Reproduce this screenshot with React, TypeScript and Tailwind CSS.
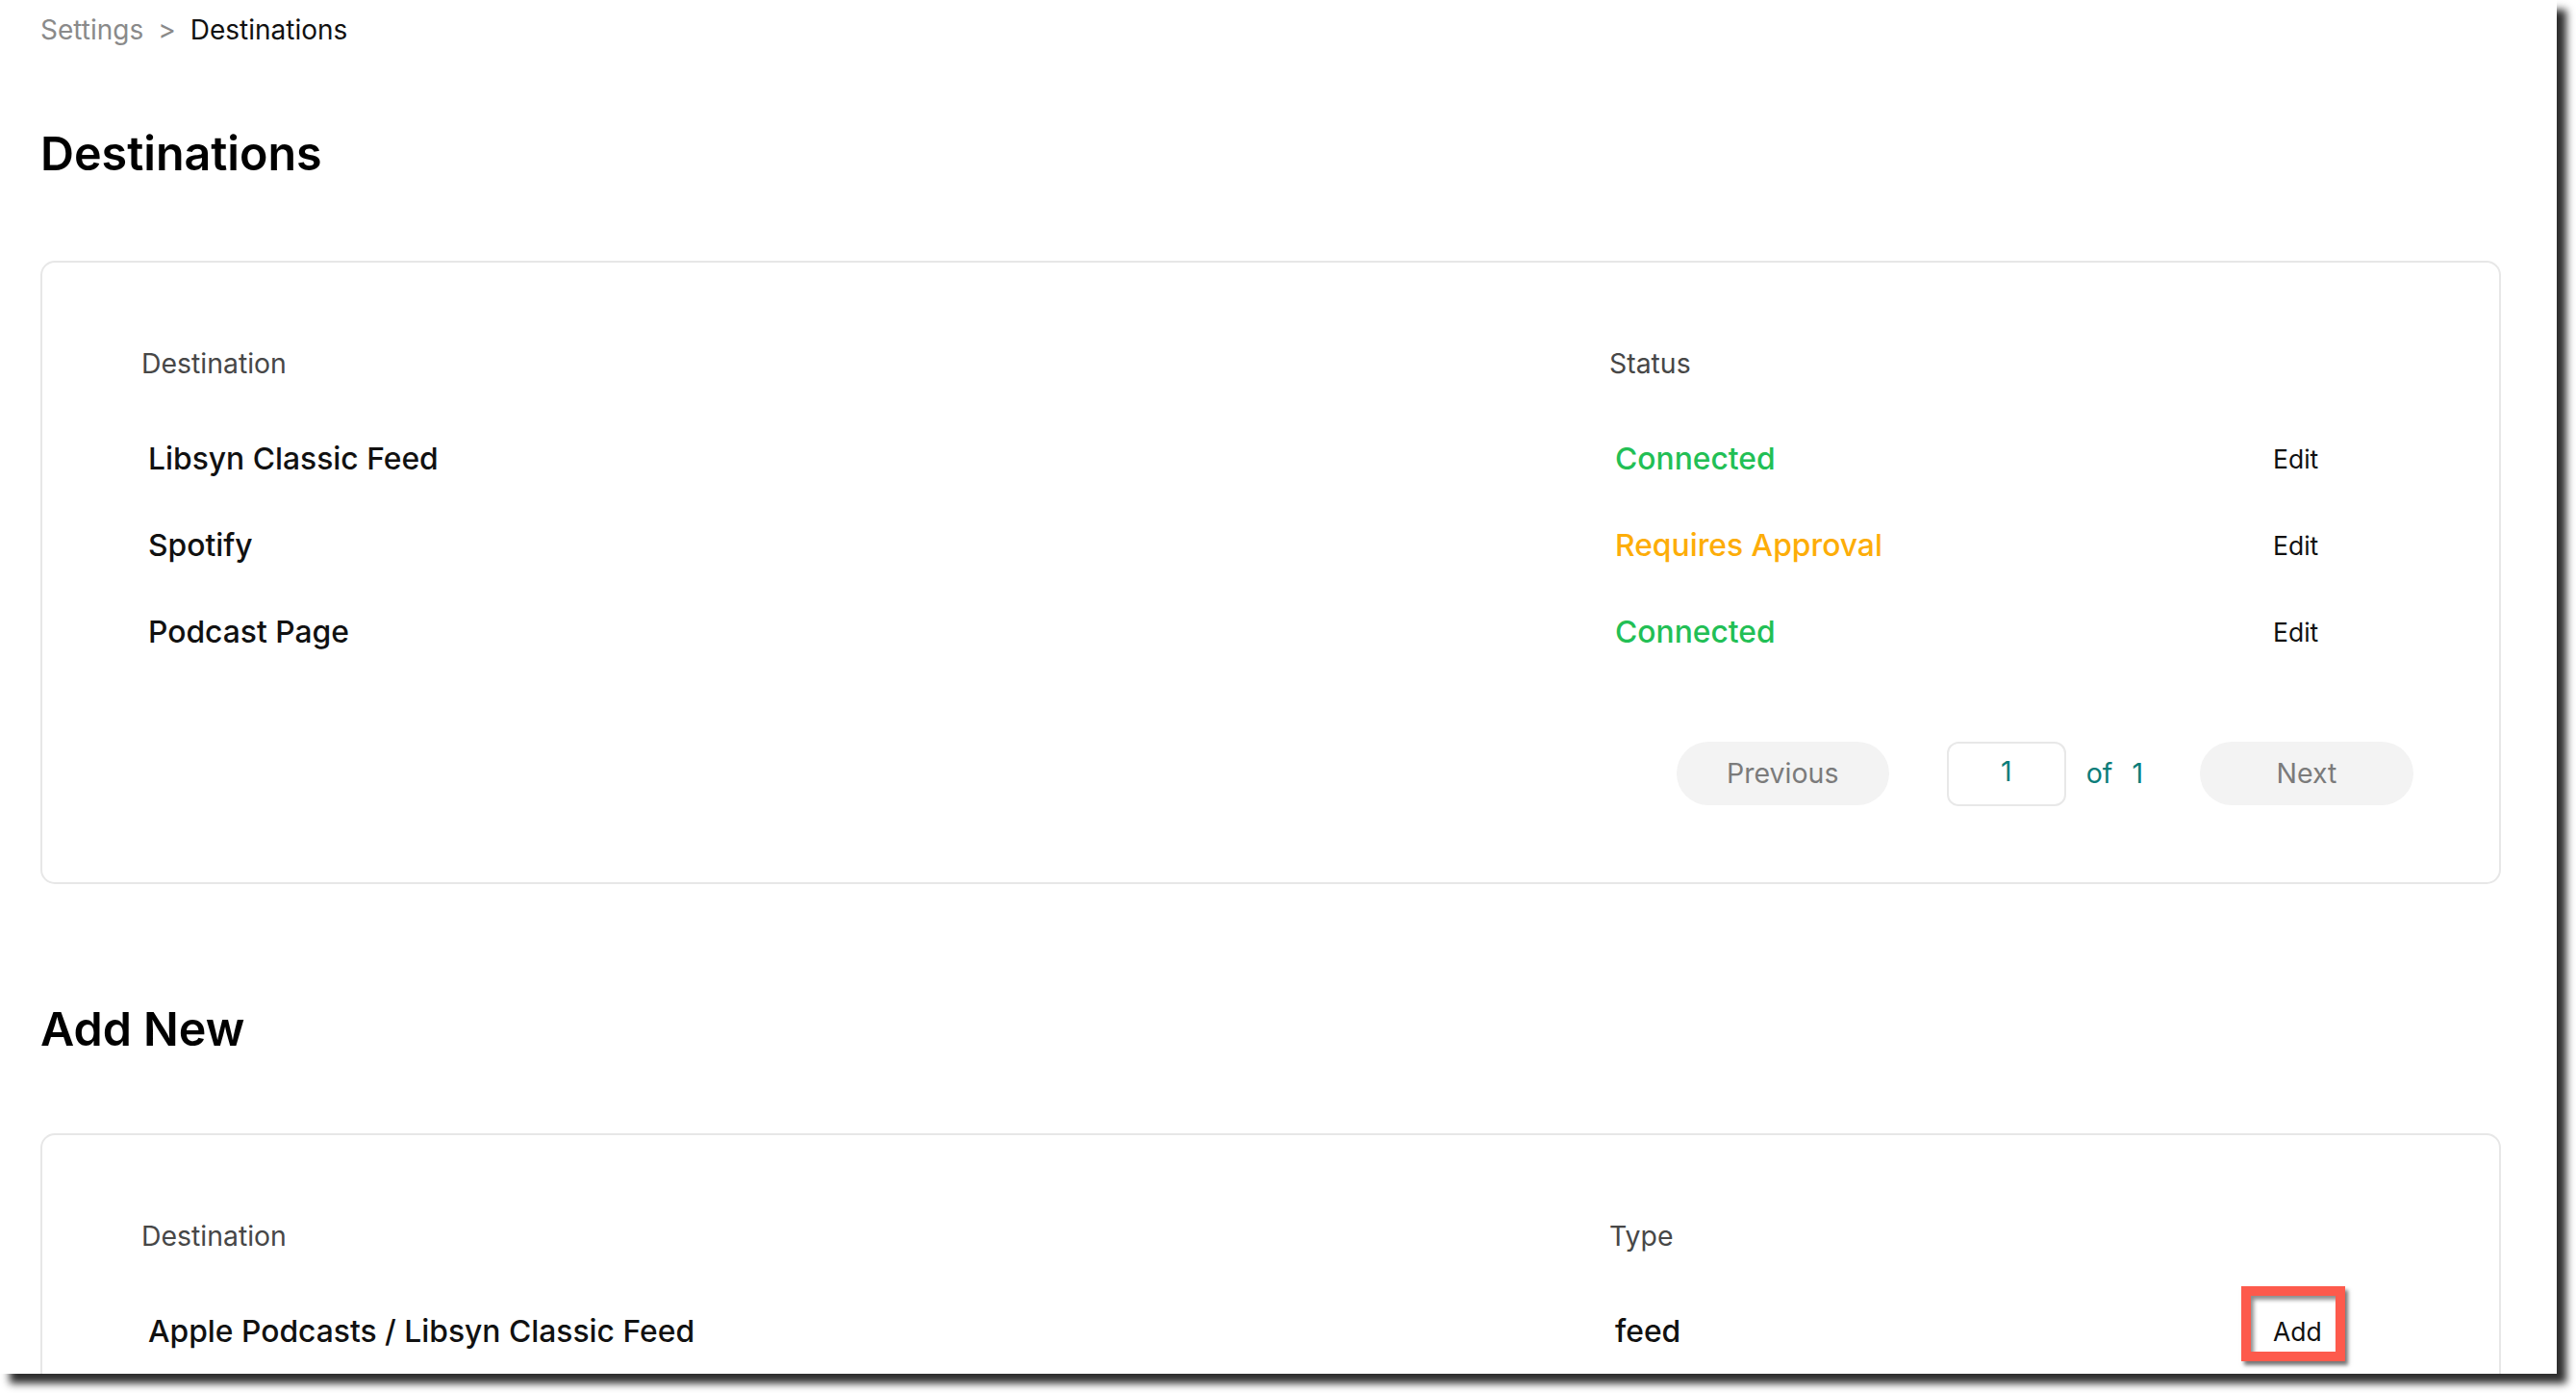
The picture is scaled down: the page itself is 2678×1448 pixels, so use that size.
import React from "react";

type Row = { name: string; status: string; tone: "green" | "amber" };

const rows: Row[] = [
  { name: "Libsyn Classic Feed", status: "Connected", tone: "green" },
  { name: "Spotify", status: "Requires Approval", tone: "amber" },
  { name: "Podcast Page", status: "Connected", tone: "green" },
];

function Header({ second }: { second: string }) {
  return (
    <div className="grid grid-cols-[1526px_690px_1fr] h-[40px] items-center text-[28.4px] leading-[40px] text-[#474747]">
      <div>Destination</div>
      <div>{second}</div>
      <div />
    </div>
  );
}

export default function App() {
  return (
    <div className="w-[2678px] h-[1448px] bg-white [font-family:Inter,sans-serif]">
      <div className="relative w-[2658px] h-[1428px] bg-white overflow-hidden shadow-[10px_10px_8px_rgba(0,0,0,0.82)]">
        <div className="pl-[42px] pr-[58px]">
          {/* Breadcrumb */}
          <div className="mt-[11px] h-[40px] flex items-center text-[28px] leading-[40px]">
            <span className="text-[#8a8a8a]">Settings</span>
            <span className="mx-[15px] text-[#8a8a8a]">&gt;</span>
            <span className="text-[#111111]">Destinations</span>
          </div>

          {/* Title */}
          <h1 className="mt-[80px] h-[58px] text-[48.4px] leading-[58px] font-semibold text-black">
            Destinations
          </h1>

          {/* Card 1 */}
          <div className="mt-[82px] border-2 border-[#e7e7e7] rounded-[15px] pl-[103px] pr-[89px] pt-[85px] pb-[80px]">
            <Header second="Status" />
            <div className="mt-[34px]">
              {rows.map((r) => (
                <div
                  key={r.name}
                  className="grid grid-cols-[1526px_690px_1fr] h-[90px] items-center"
                >
                  <div className="pl-[7px] text-[31.8px] leading-[40px] font-medium text-[#111111]">
                    {r.name}
                  </div>
                  <div
                    className={
                      "pl-[6px] text-[31.8px] leading-[40px] font-medium " +
                      (r.tone === "green" ? "text-[#22bf55]" : "text-[#fdad08]")
                    }
                  >
                    {r.status}
                  </div>
                  <div className="text-[26.5px] leading-[40px] text-[#111111]">Edit</div>
                </div>
              ))}
            </div>

            {/* Pagination */}
            <div className="mt-[69px] flex justify-end items-center h-[66px] text-[28.5px]">
              <button className="w-[221px] h-[66px] rounded-full bg-[#f3f3f3] text-[#7b7b7b] flex items-center justify-center">
                Previous
              </button>
              <div className="ml-[60px] w-[124px] h-[67px] border-2 border-[#e8e8e8] rounded-[12px] flex items-center justify-center pb-[4px] text-[#0b7d7a]">
                1
              </div>
              <span className="ml-[21px] text-[#0b7d7a]">of</span>
              <span className="ml-[20px] text-[#0b7d7a]">1</span>
              <button className="ml-[59px] w-[222px] h-[66px] rounded-full bg-[#f3f3f3] text-[#7b7b7b] flex items-center justify-center">
                Next
              </button>
            </div>
          </div>

          {/* Add New */}
          <h2 className="mt-[122px] h-[58px] text-[48.4px] leading-[58px] font-semibold text-black">
            Add New
          </h2>

          {/* Card 2 */}
          <div className="mt-[79px] border-2 border-[#e7e7e7] rounded-[15px] pl-[103px] pr-[89px] pt-[85px] pb-[80px]">
            <Header second="Type" />
            <div className="mt-[34px]">
              <div className="grid grid-cols-[1526px_690px_1fr] h-[90px] items-center">
                <div className="pl-[7px] text-[31.8px] leading-[40px] font-medium text-[#111111]">
                  Apple Podcasts / Libsyn Classic Feed
                </div>
                <div className="pl-[6px] text-[31.8px] leading-[40px] font-medium text-[#111111]">
                  feed
                </div>
                <div className="relative text-[26.5px] leading-[40px] text-[#111111]">
                  <span className="absolute left-[-33px] top-[-27px] w-[108px] h-[78px] border-[10px] border-[#fd5a4c] shadow-[3px_4px_4px_rgba(0,0,0,0.55),inset_3px_4px_4px_rgba(0,0,0,0.45)]" />
                  <span className="relative">Add</span>
                </div>
              </div>
            </div>
          </div>
        </div>
      </div>
    </div>
  );
}
